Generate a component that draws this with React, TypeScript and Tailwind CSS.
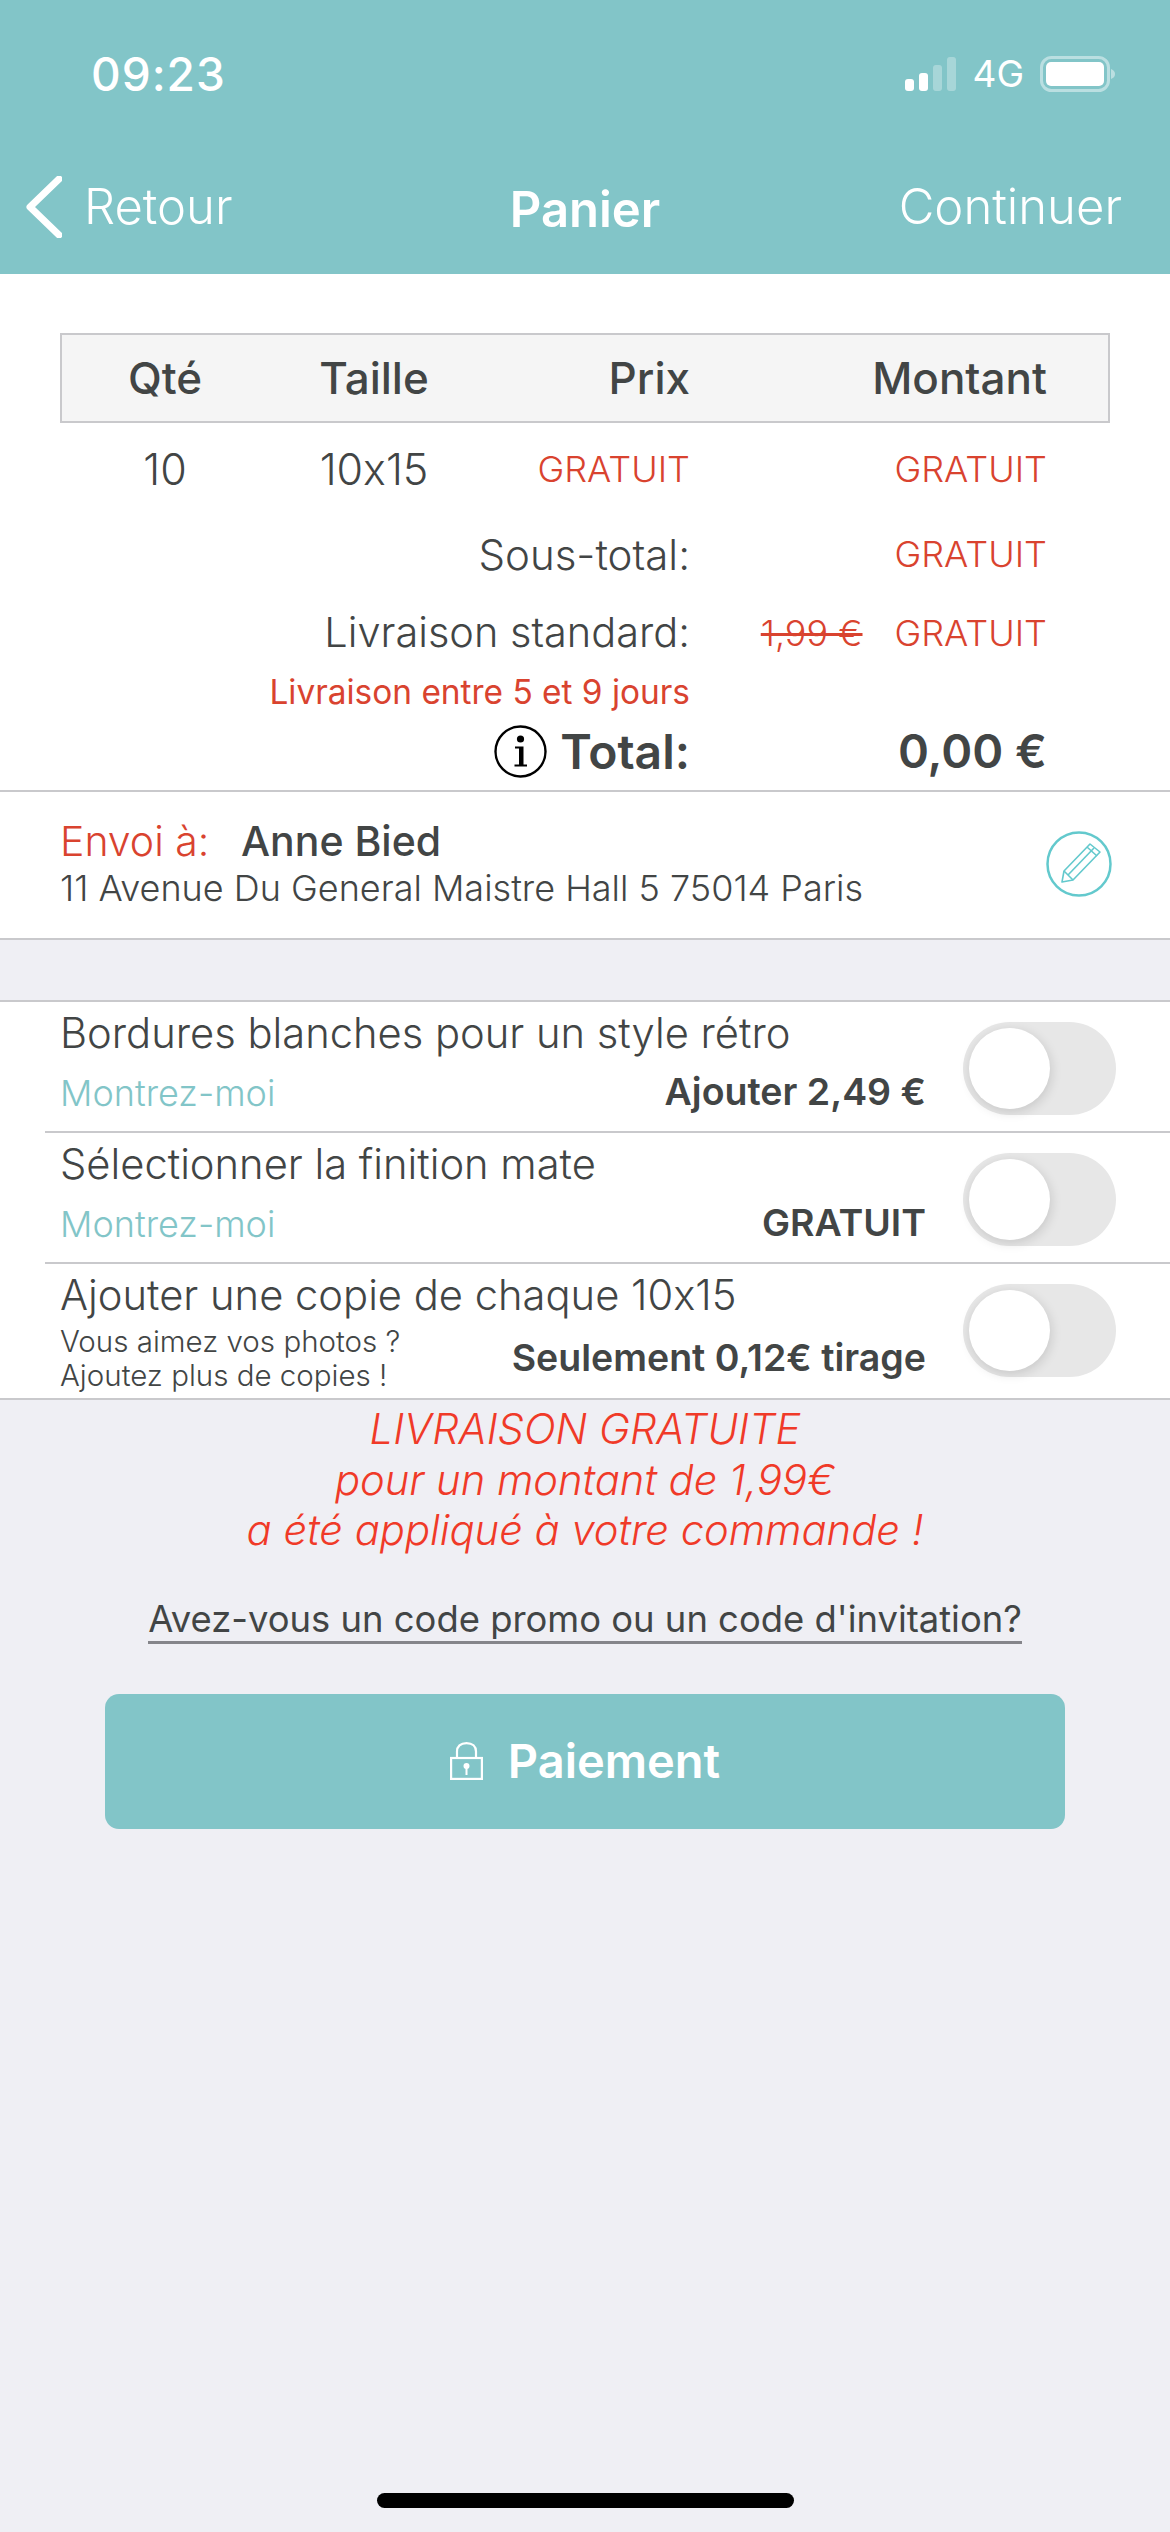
const TEAL = "bg-[#82c5c8]";

function SignalIcon() {
  return (
    <svg width="52" height="34" viewBox="0 0 52 34" className="block">
      <rect x="0" y="22" width="9" height="12" rx="3" fill="#fff" />
      <rect x="14" y="16" width="9" height="18" rx="3" fill="#fff" />
      <rect x="28" y="8" width="9" height="26" rx="3" fill="#fff" fillOpacity="0.3" />
      <rect x="42" y="0" width="9" height="34" rx="3" fill="#fff" fillOpacity="0.3" />
    </svg>
  );
}

function BatteryIcon() {
  return (
    <svg width="75" height="36" viewBox="0 0 75 36" className="block">
      <rect x="1.5" y="1.5" width="67" height="33" rx="10" fill="none" stroke="#fff" strokeOpacity="0.45" strokeWidth="3" />
      <rect x="6" y="6" width="58" height="24" rx="5" fill="#fff" />
      <path d="M71 13c3 1 4 3 4 5s-1 4-4 5z" fill="#fff" fillOpacity="0.45" />
    </svg>
  );
}

function InfoIcon() {
  return (
    <svg width="53" height="53" viewBox="0 0 53 53" className="block">
      <circle cx="26.5" cy="26.5" r="25" fill="none" stroke="#000" strokeWidth="2.4" />
      <circle cx="26.5" cy="14" r="3.6" fill="#000" />
      <path d="M21 21.5h8.5v18H33v2H20.5v-2H25V23.5h-4z" fill="#000" />
    </svg>
  );
}

function EditIcon() {
  return (
    <svg width="66" height="66" viewBox="0 0 66 66" className="block">
      <circle cx="33" cy="33" r="31.5" fill="none" stroke="#63c9cd" strokeWidth="2.5" />
      <g fill="none" stroke="#63c9cd" strokeWidth="1.6" strokeLinejoin="round">
        <path d="M18 40 L44 13 L54 21 L27 49 L16 51 Z" />
        <path d="M22 44 L48 17" />
        <path d="M18 40 L27 49" />
        <path d="M41 16 L51 25" />
      </g>
    </svg>
  );
}

function LockIcon() {
  return (
    <svg width="33" height="38" viewBox="0 0 33 38" className="block">
      <rect x="1.1" y="16" width="30.8" height="20.9" fill="none" stroke="#fff" strokeWidth="2.2" />
      <path d="M7 16V9.5C7 4.5 10.5 1.1 16.5 1.1S26 4.5 26 9.5V16" fill="none" stroke="#fff" strokeWidth="2.2" />
      <circle cx="16.5" cy="24" r="3" fill="#fff" />
      <rect x="15.5" y="25" width="2" height="8" fill="#fff" />
    </svg>
  );
}

function Toggle() {
  return (
    <div className="relative w-[153px] h-[93px] rounded-full bg-[#e7e7e7] shrink-0">
      <div className="absolute left-[6px] top-[6px] w-[81px] h-[81px] rounded-full bg-white shadow-[1px_3px_12px_rgba(0,0,0,0.14)]" />
    </div>
  );
}

function SummaryRow({ label, value, old, h }: { label: React.ReactNode; value: React.ReactNode; old?: string; h: string }) {
  return (
    <div className={`flex items-center ${h}`}>
      <div className="w-[690px] text-right shrink-0 flex justify-end items-center">{label}</div>
      <div className="flex-1 flex justify-end items-center pr-[123px] gap-[32px]">
        {old && <span className="text-[36px] font-light text-[#d9432f] line-through decoration-[3px]">{old}</span>}
        {value}
      </div>
    </div>
  );
}

function Gratuit() {
  return <span className="text-[36px] font-light text-[#d9432f]">GRATUIT</span>;
}

function OptionRow({ title, left, right, last }: { title: string; left: React.ReactNode; right: string; last?: boolean }) {
  return (
    <div className={`relative ${last ? "h-[134px]" : "h-[131px]"} pl-[60px] pr-[54px] pt-[20px] flex items-start justify-between`}>
      <div className="flex-1 pr-[37px] mt-[-19px]">
        <div className="h-[60px] flex items-center text-[41.7px] font-light whitespace-nowrap">{title}</div>
        <div className={`flex justify-between items-center ${last ? "h-[66px]" : "h-[59px]"}`}>
          {left}
          <span className="text-[37.5px] font-semibold whitespace-nowrap">{right}</span>
        </div>
      </div>
      <Toggle />
      {!last && <div className="absolute left-[45px] right-0 bottom-0 h-[2px] bg-[#c9c9cc]" />}
    </div>
  );
}

function Montrez() {
  return <span className="text-[36px] font-light text-[#82c5c8]">Montrez-moi</span>;
}

export default function App() {
  return (
    <div className="relative w-[1170px] h-[2532px] bg-[#efeff4] overflow-hidden font-['Inter',sans-serif] text-[#424545] [font-feature-settings:'calt'_0]">
      <div className={`${TEAL} h-[274px] text-white flex flex-col`}>
        <div className="flex justify-between items-center h-[148px] pl-[91px] pr-[55px]">
          <span className="text-[46px] font-medium tracking-[1px]">09:23</span>
          <div className="flex items-center">
            <SignalIcon />
            <span className="text-[37px] ml-[15px] mr-[16px]">4G</span>
            <BatteryIcon />
          </div>
        </div>
        <div className="relative flex-1 flex items-center justify-between pl-[26px] pr-[48px] pb-[8px]">
          <div className="flex items-center gap-[22px]">
            <svg width="36" height="62" viewBox="0 0 36 62" className="block">
              <path d="M33 3 L4 31 L33 59" fill="none" stroke="#fff" strokeWidth="7" strokeLinecap="round" strokeLinejoin="round" />
            </svg>
            <span className="text-[49px] font-light">Retour</span>
          </div>
          <span className="absolute inset-x-0 top-[25px] text-center text-[49px] font-semibold">Panier</span>
          <span className="text-[49px] font-light">Continuer</span>
        </div>
      </div>

      <div className="bg-white h-[518px] pt-[59px] border-b-2 border-[#c9c9cc]">
        <div className="mx-[60px] h-[90px] bg-[#f5f5f5] border-2 border-[#c9c9cc] grid grid-cols-[206px_212px_210px_1fr] items-center text-[44px] font-medium">
          <span className="text-center">Qté</span>
          <span className="text-center">Taille</span>
          <span className="text-right">Prix</span>
          <span className="text-right pr-[61px]">Montant</span>
        </div>
        <div className="mx-[60px] h-[92px] grid grid-cols-[210px_208px_212px_1fr] items-center text-[43px] font-light">
          <span className="text-center">10</span>
          <span className="text-center">10x15</span>
          <span className="text-right text-[36px] text-[#d9432f]">GRATUIT</span>
          <span className="text-right pr-[63px] text-[36px] text-[#d9432f]">GRATUIT</span>
        </div>
        <SummaryRow h="h-[78px]" label={<span className="text-[42px] font-light">Sous-total:</span>} value={<Gratuit />} />
        <SummaryRow h="h-[79px]" label={<span className="text-[41.5px] font-light">Livraison standard:</span>} old="1,99 €" value={<Gratuit />} />
        <div className="w-[690px] text-right text-[33.4px] font-normal text-[#d9432f] h-[40px] flex items-center justify-end">Livraison entre 5 et 9 jours</div>
        <SummaryRow
          h="h-[79px]"
          label={
            <span className="flex items-center gap-[13px] text-[48px] font-semibold">
              <InfoIcon />
              Total:
            </span>
          }
          value={<span className="text-[47px] font-semibold">0,00 €</span>}
        />
      </div>

      <div className="bg-white h-[148px] border-b-2 border-[#c9c9cc] pl-[60px] pr-[58px] pb-[3px] flex items-center justify-between">
        <div>
          <div className="flex items-center h-[48px]">
            <span className="text-[41px] font-light text-[#d9432f] w-[181px]">Envoi à:</span>
            <span className="text-[41px] font-medium">Anne Bied</span>
          </div>
          <div className="text-[36px] font-light h-[44px] flex items-center">11 Avenue Du General Maistre Hall 5 75014 Paris</div>
        </div>
        <EditIcon />
      </div>

      <div className="mt-[60px] bg-white border-t-2 border-b-2 border-[#c9c9cc]">
        <OptionRow title="Bordures blanches pour un style rétro" left={<Montrez />} right="Ajouter 2,49 €" />
        <OptionRow title="Sélectionner la finition mate" left={<Montrez />} right="GRATUIT" />
        <OptionRow
          title="Ajouter une copie de chaque 10x15"
          left={
            <span className="text-[29.5px] leading-[34px] font-light">
              Vous aimez vos photos ?<br />
              Ajoutez plus de copies !
            </span>
          }
          right="Seulement 0,12€ tirage"
          last
        />
      </div>

      <div className="mt-[4px] text-center text-[41.7px] leading-[50.5px] italic font-light text-[#f03a28]">
        <div>LIVRAISON GRATUITE</div>
        <div>pour un montant de 1,99€</div>
        <div>a été appliqué à votre commande !</div>
      </div>

      <div className="mt-[41px] flex justify-center">
        <span className="text-[36.4px] font-normal border-b-[3px] border-[#85858a] leading-[44px]">Avez-vous un code promo ou un code d'invitation?</span>
      </div>

      <button className={`mt-[50px] mx-[105px] w-[960px] h-[135px] rounded-[14px] ${TEAL} text-white flex items-center justify-center gap-[25px]`}>
        <LockIcon />
        <span className="text-[47px] font-semibold">Paiement</span>
      </button>

      <div className="absolute left-[377px] bottom-[24px] w-[417px] h-[15px] rounded-full bg-black" />
    </div>
  );
}
